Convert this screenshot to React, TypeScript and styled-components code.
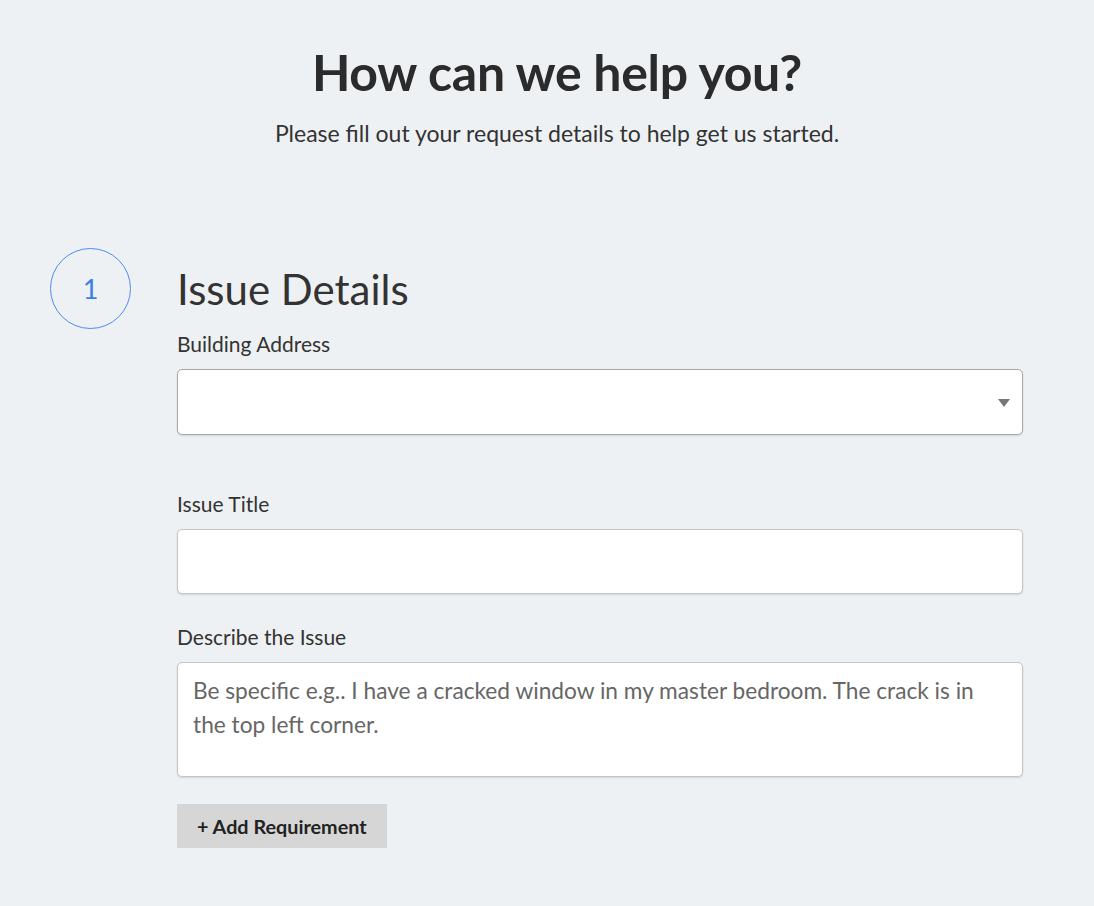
import React from 'react';
import styled, { createGlobalStyle } from 'styled-components';

const GlobalStyle = createGlobalStyle`
  html, body {
    margin: 0;
    padding: 0;
    background: #eef1f4;
    font-family: Lato, "Open Sans", sans-serif;
    color: #333;
  }
`;

const Page = styled.div`
  width: 1094px;
  height: 906px;
  box-sizing: border-box;
  padding-top: 40px;
  overflow: hidden;
`;

const Header = styled.header`
  text-align: center;
  margin-left: 20px;
`;

const Title = styled.h1`
  margin: 0;
  font-size: 50px;
  font-weight: 700;
  line-height: 64px;
  color: #2b2b2b;
  letter-spacing: -0.3px;
`;

const Subtitle = styled.p`
  margin: 15px 0 0;
  font-size: 23px;
  line-height: 28px;
  color: #333;
`;

const Section = styled.section`
  display: flex;
  margin-top: 101px;
  padding-left: 50px;
`;

const StepCircle = styled.div`
  width: 79px;
  height: 79px;
  flex-shrink: 0;
  border: 1.5px solid #4a8df0;
  border-radius: 50%;
  display: flex;
  align-items: center;
  justify-content: center;
  color: #3b7ee8;
  font-size: 27px;
  font-weight: 400;
`;

// right column with the form
const Body = styled.div`
  margin-left: 46px;
  width: 846px;
  padding-top: 17px;
`;

const SectionTitle = styled.h2`
  margin: 0;
  font-size: 42px;
  font-weight: 400;
  line-height: 48px;
  color: #333;
`;

const Field = styled.div<{ $gap?: number }>`
  margin-top: ${(p) => p.$gap ?? 0}px;
`;

const Label = styled.label`
  display: block;
  font-size: 21px;
  line-height: 26px;
  color: #333;
  margin-bottom: 12px;
`;

const BoxBase = styled.div`
  box-sizing: border-box;
  width: 846px;
  background: #fff;
  border: 1px solid #c6c6c6;
  border-radius: 5px;
  box-shadow: 0 1px 2px rgba(0, 0, 0, 0.12);
`;

const SelectBox = styled(BoxBase)`
  height: 66px;
  display: flex;
  align-items: center;
  justify-content: flex-end;
  padding-right: 12px;
  border-color: #a8a8a8;
`;

const Caret = styled.span`
  width: 0;
  height: 0;
  border-left: 6px solid transparent;
  border-right: 6px solid transparent;
  border-top: 8px solid #777;
  margin-top: 2px;
`;

const InputBox = styled(BoxBase)`
  height: 65px;
`;

const TextAreaBox = styled(BoxBase)`
  height: 115px;
  padding: 11px 30px 11px 15px;
  font-size: 22.7px;
  line-height: 34px;
  color: #666;
`;

const AddButton = styled.button`
  margin-top: 27px;
  height: 44px;
  padding: 0 20px;
  border: none;
  background: #d6d6d6;
  font-family: Lato, sans-serif;
  font-size: 19.8px;
  font-weight: 700;
  color: #222;
  cursor: pointer;
`;

export default function App() {
  return (
    <Page>
      <GlobalStyle />
      <Header>
        <Title>How can we help you?</Title>
        <Subtitle>Please fill out your request details to help get us started.</Subtitle>
      </Header>
      <Section>
        <StepCircle>1</StepCircle>
        <Body>
          <SectionTitle>Issue Details</SectionTitle>
          <Field $gap={18}>
            <Label>Building Address</Label>
            <SelectBox>
              <Caret />
            </SelectBox>
          </Field>
          <Field $gap={56}>
            <Label>Issue Title</Label>
            <InputBox />
          </Field>
          <Field $gap={30}>
            <Label>Describe the Issue</Label>
            <TextAreaBox>
              Be specific e.g.. I have a cracked window in my master bedroom. The crack is in
              the top left corner.
            </TextAreaBox>
          </Field>
          <AddButton>+ Add Requirement</AddButton>
        </Body>
      </Section>
    </Page>
  );
}
